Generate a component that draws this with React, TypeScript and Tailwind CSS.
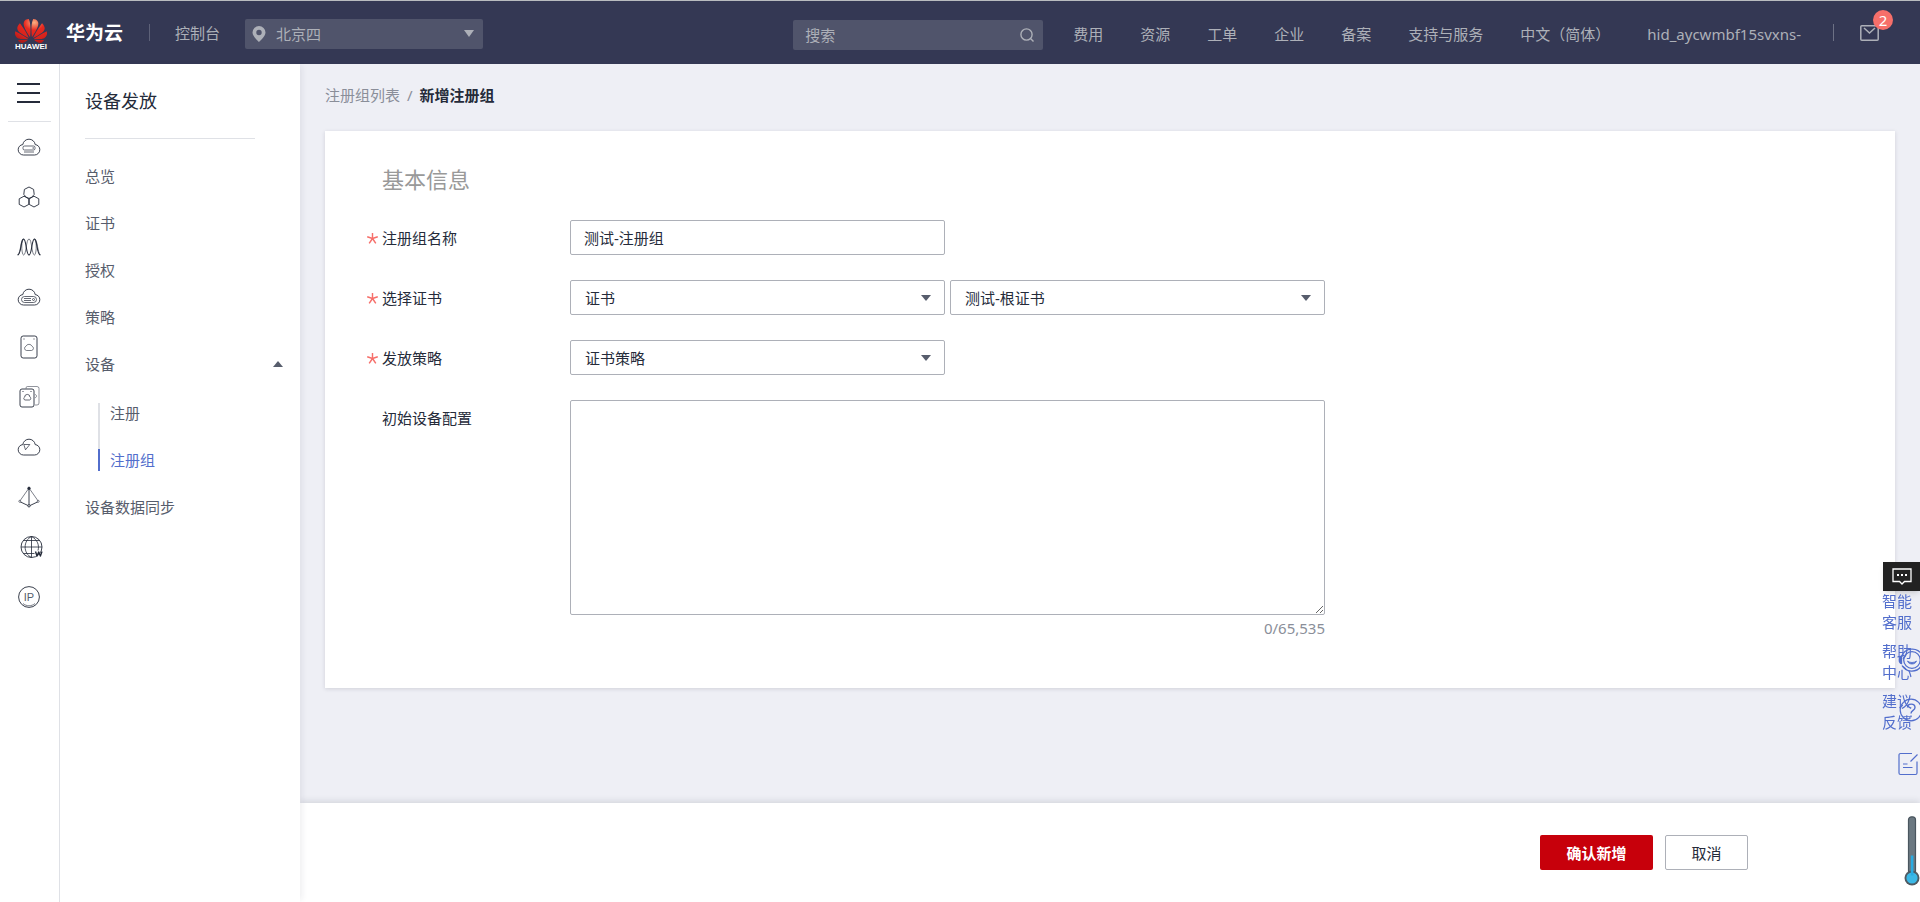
import { useState } from "react";
import type { ReactNode } from "react";
import { SiHuawei } from "react-icons/si";

const topLinks = ["费用", "资源", "工单", "企业", "备案", "支持与服务", "中文（简体）", "hid_aycwmbf15svxns-"];

const CLOUD = "M6.5 20h11a5.3 5.3 0 0 0 5.3-5.3 5 5 0 0 0-4.6-5.1A6.2 6.2 0 0 0 12 4.2a6.2 6.2 0 0 0-6.2 5.4 5 5 0 0 0-4.6 5.1A5.3 5.3 0 0 0 6.5 20z";

// service shortcuts in the narrow rail
const railItems: { name: string; art: ReactNode }[] = [
  {
    name: "弹性云服务器",
    art: (
      <>
        <path d={CLOUD} />
        <rect x="6" y="11" width="12" height="4" rx="1.5" strokeWidth="0.7" />
        <path d="M15.5 13h1.5" />
        <path d="M7 17h10" strokeWidth="0.7" />
      </>
    ),
  },
  {
    name: "容器引擎",
    art: (
      <>
        <path d="M12 2l4.6 2.4.6 5-2.4 2.8L12 13.4l-2.8-1.2-2.4-2.8.6-5z" />
        <path d="M7 11.2l4.8 2.6v5.6L7 22l-4.8-2.6v-5.6z" />
        <path d="M17 11.2l4.8 2.6v5.6L17 22l-4.8-2.6v-5.6z" />
      </>
    ),
  },
  {
    name: "弹性伸缩",
    art: (
      <>
        <path d="M.6 20C4.500 20 3.500 4 6.500 4s2.500 16 5.500 16M12 20c3 0 2.500-16 5.500-16s2 16 5.900 16" strokeWidth="1.1" />
        <path d="M.6 20C4 18 3.500 4 6.500 4 3.500 8 5 20 6.500 20 9.500 20 9 4 12 4s2.500 16 5.500 16c1.500 0 3-12 0-16 3 0 3 14 5.900 16" strokeWidth="0.6" />
      </>
    ),
  },
  {
    name: "云耀云服务器",
    art: (
      <>
        <path d={CLOUD} />
        <rect x="4.5" y="11.5" width="15" height="6" rx="3" strokeWidth="0.7" />
        <path d="M7 13.5h7M7 15.5h7" strokeWidth="0.7" />
        <circle cx="16.500" cy="14.500" r="1" strokeWidth="0.7" />
      </>
    ),
  },
  {
    name: "云硬盘",
    art: (
      <>
        <rect x="4" y="1" width="16" height="22" rx="2.2" />
        <path d="M6.5 4h1M16.5 4h1" />
        <path d="M9.500 15.500h5a2.200 2.200 0 0 0 .6-4.200 3.400 3.400 0 0 0-6.200 0 2.200 2.200 0 0 0 .6 4.200z" strokeWidth="0.6" />
      </>
    ),
  },
  {
    name: "云备份",
    art: (
      <>
        <path d="M9 3.500V3a1.500 1.500 0 0 1 1.500-1.500H20a2 2 0 0 1 2 2V18a2 2 0 0 1-2 2h-2M18 9.500c2 .3 2 3 0 3.200" strokeWidth="0.5" />
        <rect x="3" y="4" width="14" height="18" rx="2" />
        <path d="M5.500 6.500h1M13.500 6.500h1" />
        <path d="M8 15h4.500a1.600 1.600 0 0 0 .4-3 2.600 2.600 0 0 0-5.200 0A1.600 1.600 0 0 0 8 15z" strokeWidth="0.7" />
      </>
    ),
  },
  {
    name: "云监控",
    art: (
      <>
        <path d={CLOUD} />
        <path d="M6.800 9.500h6l-4.300 5.300z" strokeWidth="0.7" />
      </>
    ),
  },
  {
    name: "虚拟私有云",
    art: (
      <>
        <path d="M12 3v18M2.500 16.500L12 21l9.500-4.500" />
        <path d="M12 3L2.500 16.500M12 3l9.500 13.500" strokeWidth="0.6" />
        <circle cx="12" cy="3.300" r="1.200" fill="currentColor" />
        <circle cx="2.800" cy="16.300" r="1" fill="white" strokeWidth="0.6" />
        <circle cx="21.200" cy="16.300" r="1" fill="white" strokeWidth="0.6" />
        <circle cx="12" cy="20.800" r="1.200" fill="white" />
      </>
    ),
  },
  {
    name: "域名注册",
    art: (
      <>
        <circle cx="14.5" cy="12" r="10.5" />
        <path d="M14.5 1.500v21M4 12h21M6.500 5.500h16M6.500 18.500h11M14.500 1.500c-8.500 4-8.500 17 0 21M14.500 1.500c6 3 8 9 6.500 14" strokeWidth="0.8" />
        <path d="M18.500 16.500l1.500 4.500 1.700-4 1.700 4 1.600-4.500" strokeWidth="1.4" />
      </>
    ),
  },
  {
    name: "弹性公网IP",
    art: (
      <>
        <circle cx="12" cy="12" r="10.4" />
        <path d="M6 18.500c3.500 3 8.500 3 12 0" strokeWidth="0.6" />
        <text x="12" y="16" textAnchor="middle" fontSize="11" fontFamily="Liberation Sans, sans-serif" fill="#575d6c" stroke="none">IP</text>
      </>
    ),
  },
];

const menuItem = "flex h-[47px] items-center pl-[25px] pr-[17px] text-[#575d6c]";

function Caret({ className }: { className: string }) {
  return (
    <svg viewBox="0 0 10 6" preserveAspectRatio="none" className={className} fill="currentColor" aria-hidden="true">
      <path d="M0 0h10L5 6z" />
    </svg>
  );
}

function Header() {
  return (
    <header className="flex h-16 shrink-0 items-center whitespace-nowrap border-t border-[#b9bcbf] bg-[#343854] text-[#adb0b8]">
      <a href="#" className="ml-[15px] flex items-center gap-[19px]">
        <span className="flex w-8 flex-col items-center">
          <svg width="0" height="0" className="absolute" aria-hidden="true">
            <radialGradient id="petal" cx="0.6" cy="0.15" r="0.9">
              <stop offset="0" stopColor="#f8b183" />
              <stop offset="0.35" stopColor="#e8291f" />
              <stop offset="0.75" stopColor="#d5221c" />
              <stop offset="1" stopColor="#a81a1a" />
            </radialGradient>
          </svg>
          <SiHuawei className="-mb-1 size-8 fill-[url(#petal)]" />
          <span className="font-['Liberation_Sans',sans-serif] text-[8px] leading-[8px] font-bold text-white">HUAWEI</span>
        </span>
        <span className="text-[19px] leading-6 font-bold text-white">华为云</span>
      </a>
      <span className="ml-[26px] h-[17px] w-px bg-[#5d6178]" />
      <a href="#" className="ml-[25px]">控制台</a>
      <label className="relative ml-[25px] flex items-center pt-[2px]">
        <svg viewBox="0 0 14 16" className="pointer-events-none absolute left-[7px] h-4 w-[14px]" fill="currentColor" aria-hidden="true">
          <path fillRule="evenodd" d="M7 0a6.500 6.500 0 0 0-6.500 6.500C.5 10.500 7 16 7 16s6.500-5.500 6.500-9.500A6.500 6.500 0 0 0 7 0zm0 3.800a2.700 2.700 0 1 1 0 5.400 2.700 2.700 0 0 1 0-5.400z" />
        </svg>
        <select aria-label="区域" className="h-[30px] w-[238px] appearance-none rounded-xs bg-[#50546b] pl-[31px] outline-none">
          <option>北京四</option>
        </select>
        <Caret className="pointer-events-none absolute right-[9px] h-[7px] w-[10px]" />
      </label>

      <div className="ml-auto flex items-center pt-1 pr-[41px]">
        <label className="relative flex items-center">
          <input type="search" aria-label="搜索" placeholder="搜索" className="h-[30px] w-[250px] rounded-xs bg-[#50546b] pl-3 outline-none placeholder:text-[#adb0b8]" />
          <svg viewBox="0 0 14 14" className="absolute right-[9px] size-[14px]" fill="none" stroke="currentColor" strokeWidth="1.4" aria-hidden="true">
            <circle cx="6.5" cy="6.5" r="5.6" />
            <path d="M10.5 10.5l3 3" />
          </svg>
        </label>
        <nav className="ml-[30px] flex gap-[37px] pb-[2px]">
          {topLinks.map((t) => (
            <a key={t} href="#">{t}</a>
          ))}
        </nav>
        <span className="mb-1 ml-8 h-[17px] w-px bg-[#6d7185]" />
        <button type="button" aria-label="消息" className="relative mb-1 ml-[26px]">
          <svg viewBox="0 0 19 16" className="h-4 w-[19px]" fill="none" stroke="currentColor" strokeWidth="1.5" aria-hidden="true">
            <rect x=".8" y=".8" width="17.4" height="14.4" rx="1" />
            <path d="M4 3l5.500 5L15 3" />
          </svg>
          <span className="absolute -top-[15px] left-[13px] size-5 rounded-full bg-[#f66f6a] text-center leading-5 text-white">2</span>
        </button>
      </div>
    </header>
  );
}

function Rail() {
  return (
    <aside className="w-[60px] shrink-0 border-r border-[#dfe1e6] bg-white text-[#252b3a]">
      <button type="button" aria-label="服务列表" className="flex h-[57px] w-full flex-col items-center justify-center gap-[7px] pr-[2px]">
        <span className="h-[2px] w-[23px] bg-current" />
        <span className="h-[2px] w-[23px] bg-current" />
        <span className="h-[2px] w-[23px] bg-current" />
      </button>
      <hr className="mx-2 border-[#dfe1e6]" />
      <ul>
        {railItems.map((item) => (
          <li key={item.name}>
            <a href="#" aria-label={item.name} className="flex h-[50px] items-center justify-center pr-[2px]">
              <svg viewBox="0 0 24 24" className="size-6 overflow-visible" fill="none" stroke="currentColor" strokeWidth="0.9" strokeLinejoin="round">
                {item.art}
              </svg>
            </a>
          </li>
        ))}
      </ul>
    </aside>
  );
}

function SideMenu() {
  const [open, setOpen] = useState(true);

  return (
    <nav className="z-10 w-60 shrink-0 bg-white shadow-[4px_0_6px_-2px_rgba(37,43,58,0.08)]">
      <h2 className="mr-[45px] mb-[13px] ml-[25px] flex h-[75px] items-center border-b border-[#dfe1e6] text-[18px] text-[#252b3a]">设备发放</h2>
      <a href="#" className={menuItem}>总览</a>
      <a href="#" className={menuItem}>证书</a>
      <a href="#" className={menuItem}>授权</a>
      <a href="#" className={menuItem}>策略</a>
      <button type="button" onClick={() => setOpen(!open)} className={`${menuItem} w-full justify-between`}>
        设备
        <Caret className={open ? "h-[6px] w-[10px] rotate-180" : "h-[6px] w-[10px]"} />
      </button>
      {open && (
        <ul className="pl-[38px]">
          <li className="flex h-12 items-end">
            <a href="#" className="flex h-8 grow border-l-2 border-[#dfe1e6] pl-[10px] leading-5 text-[#575d6c]">注册</a>
          </li>
          <li className="flex h-12 flex-col">
            <span className="h-[14px] border-l-2 border-[#dfe1e6]" />
            <a href="#" aria-current="page" className="flex h-[22px] items-center border-l-2 border-[#526ecc] pl-[10px] text-[#526ecc]">注册组</a>
          </li>
        </ul>
      )}
      <a href="#" className={menuItem}>设备数据同步</a>
    </nav>
  );
}

function FormRow({ label, htmlFor, required, children }: { label: string; htmlFor: string; required?: boolean; children: ReactNode }) {
  return (
    <div className="flex">
      <label htmlFor={htmlFor} className="flex h-[35px] w-[203px] shrink-0 items-center">
        <span className="flex w-[15px] pt-[2px] text-[#f66f6a]">
          {required && (
            <svg viewBox="0 0 10 10" className="size-[11px]" fill="none" stroke="currentColor" strokeWidth="1.3" aria-hidden="true">
              <path d="M5 5V0M5 5l4.800-1.600M5 5l3 4.500M5 5L2 9.500M5 5L.2 3.400" />
            </svg>
          )}
        </span>
        {label}
      </label>
      {children}
    </div>
  );
}

function Select({ id, label, value }: { id: string; label: string; value: string }) {
  return (
    <div className="relative w-[375px]">
      <select id={id} aria-label={label} className="h-[35px] w-full appearance-none rounded-xs border border-[#adb0b8] bg-white pl-[14px] outline-none focus:border-[#526ecc]">
        <option>{value}</option>
      </select>
      <Caret className="pointer-events-none absolute top-[15px] right-[14px] h-[6px] w-[10px] text-[#575d6c]" />
    </div>
  );
}

function HelpDock() {
  return (
    <div className="fixed right-0 bottom-[69px] z-20 flex h-[271px] w-[38px] flex-col text-[#526ecc]">
      <button type="button" aria-label="在线咨询" className="flex h-[29px] w-[37px] shrink-0 items-center justify-center self-end bg-[#222] text-white shadow-md">
        <svg viewBox="0 0 20 17" className="h-[17px] w-5" fill="none" stroke="currentColor" strokeWidth="1.3" aria-hidden="true">
          <path d="M1 1h18v12.500h-6.500L10 16l-2.500-2.500H1z" />
          <path d="M5 7h2M9 7h2M13 7h2" strokeWidth="2" />
        </svg>
      </button>
      <a href="#" className="relative mb-2 w-[30px] leading-[21px]">
        智能客服
        <svg viewBox="0 0 26 26" className="absolute top-14 left-4 size-[26px]" fill="none" stroke="currentColor" strokeWidth="1.3" aria-hidden="true">
          <circle cx="14" cy="13" r="8.300" />
          <path d="M3.500 9.500A11.300 11.300 0 0 1 24 8M4 18.500c4 7 14 7.500 19 1" />
          <path d="M3.500 9.500c-3 .5-3 6.500 0 7z" fill="currentColor" />
          <path d="M9.500 14c1 4 8 4 9 0-2.500 2-6.500 2-9 0z" fill="currentColor" strokeWidth="0.8" />
        </svg>
      </a>
      <a href="#" className="relative mb-2 w-[30px] leading-[21px]">
        帮助中心
        <svg viewBox="0 0 26 26" className="absolute top-14 left-4 size-[26px]" fill="none" stroke="currentColor" strokeWidth="1.2" aria-hidden="true">
          <circle cx="13" cy="13" r="10.800" />
          <path d="M9.500 10.500c0-4.500 7.500-4.500 7.500 0 0 3-4 2.800-4 6M13 18.500v1.800" strokeWidth="1.4" />
        </svg>
      </a>
      <a href="#" className="relative w-[30px] leading-[21px]">
        建议反馈
        <svg viewBox="0 0 20 24" className="absolute top-[61px] left-4 h-6 w-5" fill="none" stroke="currentColor" strokeWidth="1.2" aria-hidden="true">
          <path d="M14 1.500H2.500A1.500 1.500 0 0 0 1 3v18a1.500 1.500 0 0 0 1.500 1.500h15A1.500 1.500 0 0 0 19 21V9.500" />
          <path d="M19.500 2.500l-7 7M5 12h4.500M5 15.500h9.500" />
        </svg>
      </a>
    </div>
  );
}

function Thermometer() {
  return (
    <svg viewBox="0 0 16 70" className="fixed right-0 bottom-4 z-20 h-[70px] w-4" aria-hidden="true">
      <rect x="4.500" y=".8" width="7" height="58" rx="3" fill="#6b7881" stroke="#4a565f" strokeWidth="1.2" />
      <circle cx="8" cy="62" r="7.500" fill="#4f5a62" />
      <circle cx="8" cy="62" r="5.600" fill="#3bb8e6" />
      <rect x="6.800" y="39.500" width="2.600" height="20" fill="#29abe2" />
    </svg>
  );
}

export default function App() {
  const [name, setName] = useState("测试-注册组");
  const [config, setConfig] = useState("");

  return (
    <div className="flex min-h-screen flex-col bg-[#eeeff5] font-['Noto_Sans','Noto_Sans_CJK_SC',sans-serif] text-[15px] leading-[22px] text-[#252b3a]">
      <Header />
      <div className="flex grow">
        <Rail />
        <SideMenu />
        <main className="flex min-w-0 grow flex-col">
          <nav className="flex gap-[7px] px-[25px] pt-5 pb-[25px] text-[#8a8e99]">
            <a href="#">注册组列表</a>
            <span>/</span>
            <span className="font-bold text-[#252b3a]">新增注册组</span>
          </nav>

          <form id="group-form" onSubmit={(e) => e.preventDefault()} className="mx-[25px] mb-[25px] flex flex-col gap-[25px] bg-white pt-8 pb-[50px] pl-[42px] shadow-[0_1px_4px_rgba(37,43,58,0.15)]">
            <h1 className="pl-[15px] text-[22px] leading-8 text-[#999]">基本信息</h1>
            <FormRow label="注册组名称" htmlFor="name" required>
              <input id="name" type="text" value={name} onChange={(e) => setName(e.target.value)} className="h-[35px] w-[375px] rounded-xs border border-[#adb0b8] px-[13px] outline-none focus:border-[#526ecc]" />
            </FormRow>
            <FormRow label="选择证书" htmlFor="cert" required>
              <div className="flex gap-[5px]">
                <Select id="cert" label="选择证书" value="证书" />
                <Select id="cert-root" label="根证书" value="测试-根证书" />
              </div>
            </FormRow>
            <FormRow label="发放策略" htmlFor="policy" required>
              <Select id="policy" label="发放策略" value="证书策略" />
            </FormRow>
            <FormRow label="初始设备配置" htmlFor="config">
              <div className="flex w-[755px] flex-col">
                <textarea id="config" value={config} maxLength={65535} onChange={(e) => setConfig(e.target.value)} className="h-[215px] rounded-xs border border-[#adb0b8] px-[13px] py-2 outline-none focus:border-[#526ecc]" />
                <span className="mt-[3px] text-right leading-5 text-[#8a8e99]">{config.length}/65,535</span>
              </div>
            </FormRow>
          </form>

          <footer className="mt-auto flex h-[99px] items-center justify-end gap-3 bg-white pr-[172px] shadow-[0_-2px_6px_rgba(37,43,58,0.12)]">
            <button type="submit" form="group-form" className="h-[35px] w-[113px] rounded-xs bg-[#c7000b] font-bold text-white">确认新增</button>
            <button type="button" className="h-[35px] w-[83px] rounded-xs border border-[#adb0b8] bg-white">取消</button>
          </footer>
        </main>
      </div>
      <HelpDock />
      <Thermometer />
    </div>
  );
}
